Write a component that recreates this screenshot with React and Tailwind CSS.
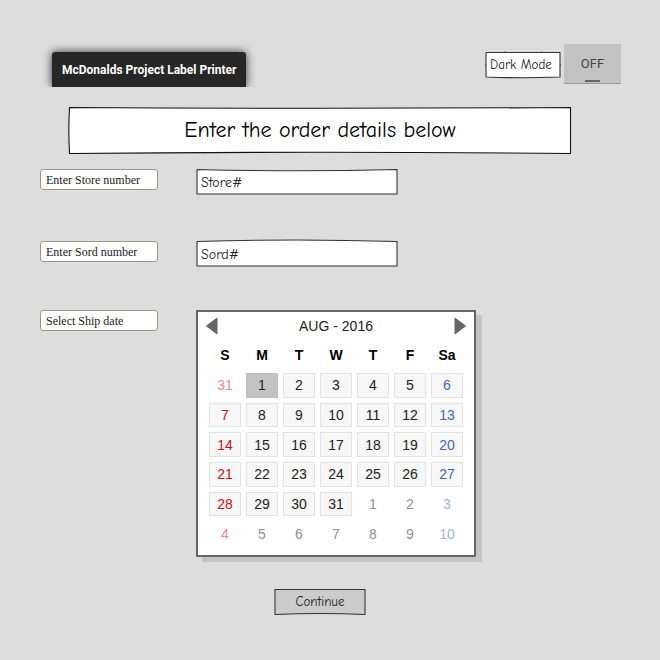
import React, { useState } from "react";

const SKETCH = "font-['Comic_Sans_MS','Comic_Neue','Noto_Sans',cursive]";

// Hand-drawn outline that stretches to the box it sits in.
function Outline({ d, viewBox, fill = "#fff", stroke = "#333" }) {
  return (
    <svg
      className="pointer-events-none absolute inset-0 h-full w-full overflow-visible"
      viewBox={viewBox}
      preserveAspectRatio="none"
      aria-hidden="true"
    >
      <path d={d} fill={fill} stroke={stroke} strokeWidth="1.1" strokeLinejoin="round" vectorEffect="non-scaling-stroke" />
    </svg>
  );
}

const WEEKDAYS = ["S", "M", "T", "W", "T", "F", "Sa"];
const WEEKS = [
  [31, 1, 2, 3, 4, 5, 6],
  [7, 8, 9, 10, 11, 12, 13],
  [14, 15, 16, 17, 18, 19, 20],
  [21, 22, 23, 24, 25, 26, 27],
  [28, 29, 30, 31, 1, 2, 3],
  [4, 5, 6, 7, 8, 9, 10],
];

function inMonth(row, col) {
  if (row === 0) return col > 0;
  if (row === 4) return col < 4;
  return row < 4;
}

function dayColor(col, current) {
  if (col === 0) return current ? "text-[#cc1010]" : "text-[#e88a8a]";
  if (col === 6) return current ? "text-[#4466bb]" : "text-[#a4b4dd]";
  return current ? "text-[#222]" : "text-[#919191]";
}

function Calendar() {
  const [selected, setSelected] = useState(1);
  return (
    <section
      aria-label="Ship date"
      className="w-[280px] border-2 border-[#666] bg-white pb-1 font-['Liberation_Sans',Arial,sans-serif] text-sm text-[#222] shadow-[6px_5px_0_#c4c4c4]"
    >
      <header className="mb-[2px] flex h-7 items-center justify-between px-2">
        <button type="button" aria-label="Previous month">
          <svg width="12" height="18" viewBox="0 0 12 18"><path d="M0.5 9 11 1v16Z" fill="#666" stroke="#666" strokeLinejoin="round" /></svg>
        </button>
        <h2>AUG - 2016</h2>
        <button type="button" aria-label="Next month">
          <svg width="12" height="18" viewBox="0 0 12 18"><path d="M11.5 9 1 1v16Z" fill="#666" stroke="#666" strokeLinejoin="round" /></svg>
        </button>
      </header>
      <table className="mx-auto h-[209px] w-[264px] table-fixed border-separate border-spacing-[5px] text-center leading-5">
        <thead>
          <tr className="h-[21px]">
            {WEEKDAYS.map((day, i) => (
              <th key={i} scope="col" className="p-0 pb-1 align-top leading-4 text-black">{day}</th>
            ))}
          </tr>
        </thead>
        <tbody>
          {WEEKS.map((week, row) => (
            <tr key={row}>
              {week.map((day, col) => {
                const current = inMonth(row, col);
                const box = !current
                  ? "border-transparent"
                  : day === selected
                    ? "border-[#bdbdbd] bg-[#c2c2c2]"
                    : "border-[#e2e2e2] bg-[#f7f7f7]";
                return (
                  <td key={col} className={`border p-0 ${box}`}>
                    <button
                      type="button"
                      onClick={() => current && setSelected(day)}
                      className={`block w-full ${dayColor(col, current)}`}
                    >
                      {day}
                    </button>
                  </td>
                );
              })}
            </tr>
          ))}
        </tbody>
      </table>
    </section>
  );
}

function FieldLabel({ htmlFor, children }) {
  return (
    <label
      htmlFor={htmlFor}
      className="block h-[21px] w-[118px] rounded-[3px] border border-[#a19684] bg-white px-[5px] font-['Liberation_Serif','Times_New_Roman',serif] text-xs leading-5 text-[#222]"
    >
      {children}
    </label>
  );
}

function SketchInput({ id, initial, d }) {
  return (
    <div className="relative h-[26px] w-full max-w-[202px]">
      <Outline viewBox="0 0 202 26" d={d} />
      <input
        id={id}
        defaultValue={initial}
        className={`relative block h-full w-full bg-transparent px-[5px] text-sm text-[#222] outline-none ${SKETCH}`}
      />
    </div>
  );
}

export default function App() {
  const [dark, setDark] = useState(false);
  return (
    <main className="min-h-screen bg-[#ddd] pt-11 pr-[39px] pb-11 pl-10">
      <div className="max-w-[581px]">
        <header className="flex justify-between pl-3">
          <div className="mt-2 h-[35px] rounded-t-[3px] bg-[#272727] px-[10px] font-[Roboto,sans-serif] text-xs leading-9 font-bold text-white shadow-[0_0_10px_#333] [clip-path:inset(-14px_-14px_0_-14px)]">
            McDonalds Project Label Printer
          </div>
          <div className="flex gap-[3px]">
            <label htmlFor="dark-mode" className={`relative mt-[7px] h-[27px] w-[76px] text-[13px] leading-[27px] text-[#222] ${SKETCH}`}>
              <Outline
                viewBox="0 0 76 27"
                stroke="#333"
                d="M1 1.5H75V26Q38 27.5 1 26ZM0 14H1M75 14H76M20 .5V1.5M57 .5V1.5"
              />
              <span className="relative pl-[5px]">Dark Mode</span>
            </label>
            <button
              id="dark-mode"
              type="button"
              role="switch"
              aria-checked={dark}
              onClick={() => setDark(!dark)}
              className="flex h-10 w-[57px] flex-col items-center border-b border-[#999] bg-[#c2c2c2] pt-[11px] font-[Roboto,sans-serif] text-[13px] leading-[18px] text-[#444]"
            >
              {dark ? "ON" : "OFF"}
              <span className="mt-[7px] h-[2px] w-[15px] bg-[#666]" />
            </button>
          </div>
        </header>

        <h1 className={`relative mt-5 mr-[50px] ml-[29px] h-[47px] text-center text-[22px] leading-[47px] text-black ${SKETCH}`}>
          <Outline
            viewBox="0 0 502 47"
            stroke="#111"
            d="M.5 .5Q250 2 501.5 .5V46.5Q250 44 .5 46.5Q-.8 23 .5 .5Z"
          />
          <span className="relative">Enter the order details below</span>
        </h1>

        <form className="mt-[15px]" onSubmit={(e) => e.preventDefault()}>
          <div className="grid grid-cols-[118px_1fr] gap-x-[38px]">
            <FieldLabel htmlFor="store">Enter Store number</FieldLabel>
            <SketchInput id="store" initial="Store#" d="M1 .5Q101 3 201 .5V25H1Z" />
          </div>
          <div className="mt-[46px] grid grid-cols-[118px_1fr] gap-x-[38px]">
            <FieldLabel htmlFor="sord">Enter Sord number</FieldLabel>
            <SketchInput id="sord" initial="Sord#" d="M1 .5Q101 -2.5 201 .5V25H1Z" />
          </div>
          <div className="mt-[43px] grid grid-cols-[118px_1fr] gap-x-[38px]">
            <FieldLabel>Select Ship date</FieldLabel>
            <Calendar />
          </div>
          <div className="mt-8 mr-[21px] flex justify-center">
            <button type="submit" className={`relative h-[26px] w-[92px] text-[13px] text-[#222] ${SKETCH}`}>
              <Outline viewBox="0 0 92 26" fill="#ccc" d="M1 .5H91V25.5Q46 23.5 1 25.5Z" />
              <span className="relative">Continue</span>
            </button>
          </div>
        </form>
      </div>
    </main>
  );
}
